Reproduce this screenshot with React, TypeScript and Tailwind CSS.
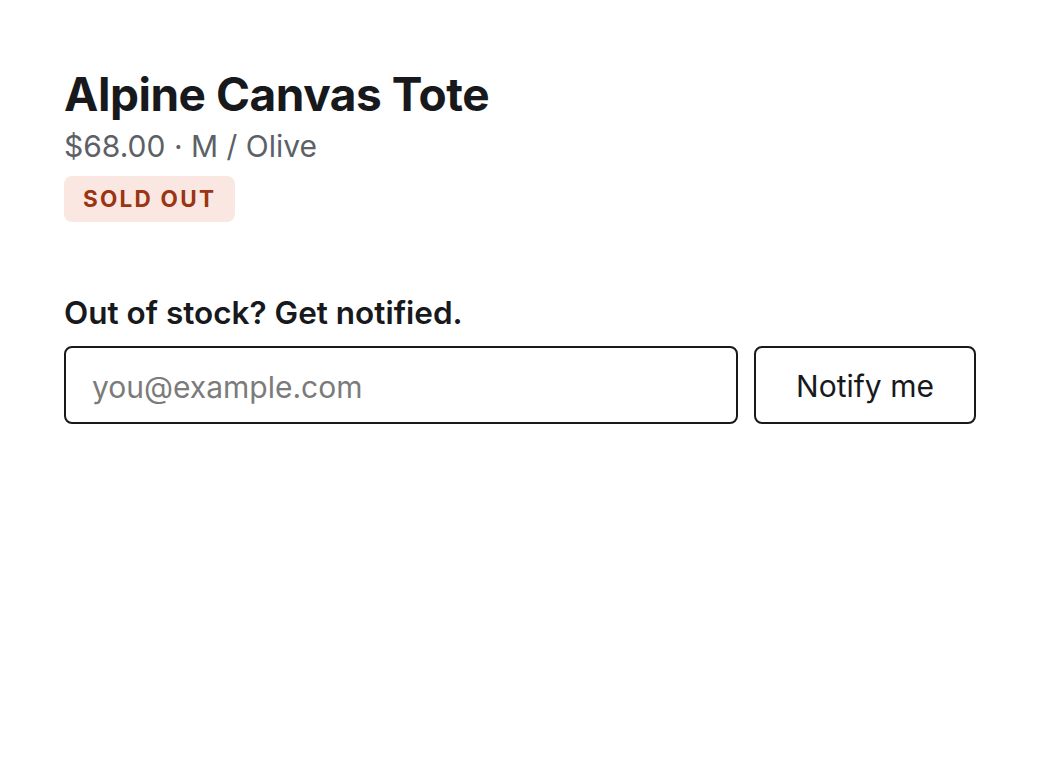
export default function App() {
  return (
    <div className="min-h-screen bg-white px-16 pt-[64px] font-['Inter',sans-serif] text-[#17191c]">
      <h1 className="text-[46px] font-bold leading-[60px] tracking-[-0.01em]">Alpine Canvas Tote</h1>
      <p className="mt-[2px] text-[30px] leading-[40px] text-[#5c6167]">$68.00 · M / Olive</p>
      <span className="mt-[10px] inline-block rounded-[8px] bg-[#fbe7e1] px-[19px] py-[8px] text-[22.5px] font-bold leading-[30px] tracking-[0.1em] text-[#9a3412]">
        SOLD OUT
      </span>

      <form className="mt-[73px]" onSubmit={(e) => e.preventDefault()}>
        <label htmlFor="email" className="block text-[31.5px] font-semibold leading-[36px]">
          Out of stock? Get notified.
        </label>
        <div className="mt-[15px] flex gap-[16px]">
          <input
            id="email"
            type="email"
            placeholder="you@example.com"
            className="h-[78px] flex-1 rounded-[8px] border-2 border-[#17191c] px-[26px] pt-[3px] text-[30px] outline-none placeholder:text-[#7b7b7b]"
          />
          <button
            type="submit"
            className="h-[78px] w-[222px] rounded-[8px] border-2 border-[#17191c] bg-white pt-[3px] text-[30px]"
          >
            Notify me
          </button>
        </div>
      </form>
    </div>
  );
}
